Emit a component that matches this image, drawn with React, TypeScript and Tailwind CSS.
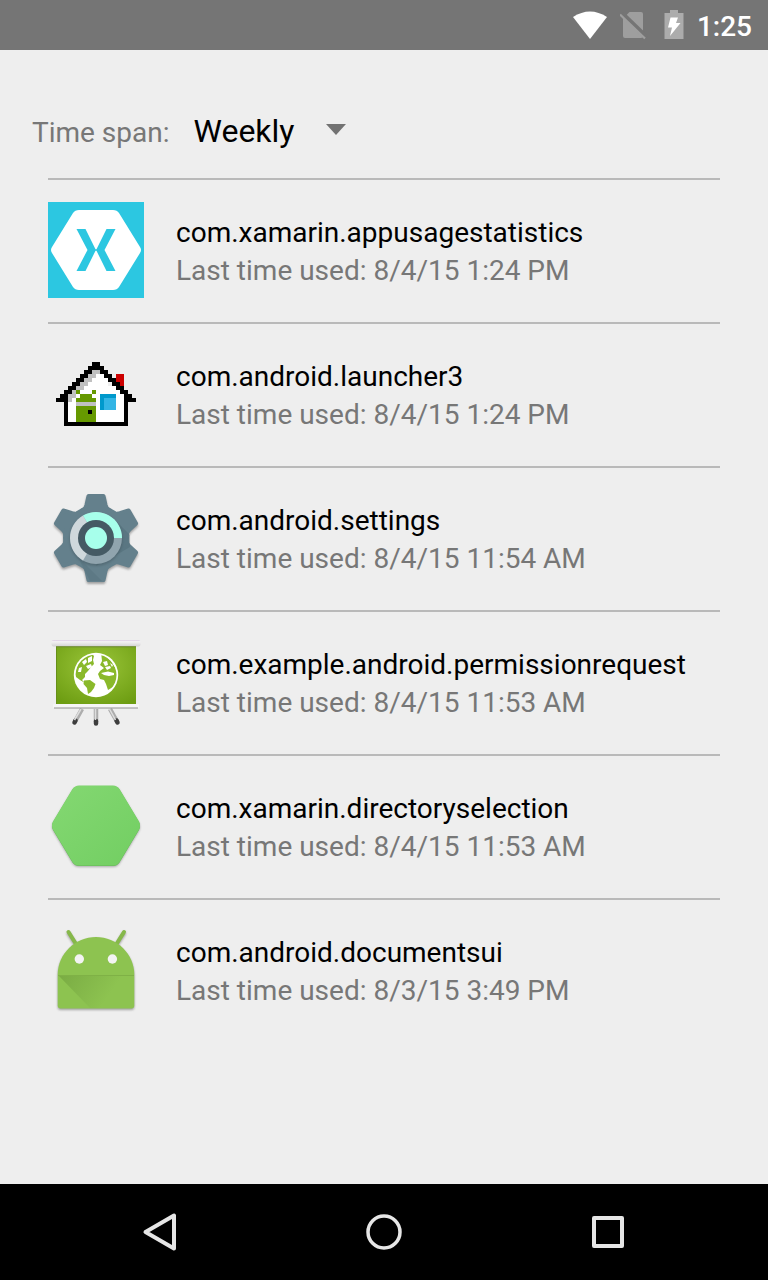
import type { ReactNode } from 'react';

function XamarinIcon() {
  return (
    <svg viewBox="0 0 96 96" className="size-24 shrink-0" aria-hidden="true">
      <rect width="96" height="96" fill="#2cc7e1" />
      <path d="M31 8H65Q69 8 71 11L92 45Q94 48 92 51L71 85Q69 88 65 88H31Q27 88 25 85L4 51Q2 48 4 45L25 11Q27 8 31 8Z" fill="#fff" />
      <path d="M28.500 27H37.500L47.500 47.200H48.500L58.500 27H67.500L56.500 48L67.500 69H58.500L48.500 48.800H47.500L37.500 69H28.500L39.500 48Z" fill="#2cc7e1" />
    </svg>
  );
}

type Cell = [x: number, y: number, w: number, h: number, fill: string];

const K = '#000000';
const G = '#c0c0c0';
const V = '#669900';
const R = '#cc0000';
const D = '#0099cc';

const house: Cell[] = [
  [3, 9, 14, 6, '#fff'], [5, 6, 10, 3, '#fff'], [7, 4, 6, 2, '#fff'], [9, 3, 3, 1, '#fff'], [4, 8, 13, 1, '#fff'], [4, 7, 12, 1, '#fff'],
  [15, 3, 2, 3, R],
  [9, 2, 2, 1, G], [8, 3, 2, 1, G], [7, 4, 2, 1, G], [6, 5, 2, 1, G], [5, 6, 2, 1, G], [4, 7, 1, 1, G], [3, 8, 2, 1, G], [3, 9, 1, 1, G],
  [9, 0, 2, 1, K], [8, 1, 4, 1, K], [7, 2, 2, 1, K], [11, 2, 2, 1, K], [6, 3, 2, 1, K], [12, 3, 2, 1, K],
  [5, 4, 2, 1, K], [13, 4, 2, 1, K], [4, 5, 2, 1, K], [14, 5, 2, 1, K], [3, 6, 2, 1, K], [15, 6, 2, 1, K],
  [2, 7, 2, 1, K], [16, 7, 2, 1, K], [1, 8, 2, 1, K], [17, 8, 2, 1, K], [0, 9, 3, 1, K], [17, 9, 3, 1, K],
  [2, 10, 1, 6, K], [17, 10, 1, 6, K], [2, 15, 16, 1, K],
  [5, 7, 1, 1, V], [9, 7, 1, 1, V], [6, 8, 3, 1, V], [5, 9, 5, 6, V], [5, 10, 5, 1, G], [8, 12, 1, 1, K],
  [11, 8, 4, 4, D], [12, 9, 3, 3, '#33b5e5'],
];

function LauncherIcon() {
  return (
    <svg viewBox="0 0 96 96" className="size-24 shrink-0" shapeRendering="crispEdges" aria-hidden="true">
      <g transform="translate(8 16) scale(4)">
        {house.map(([x, y, w, h, fill], i) => (
          <rect key={i} x={x} y={y} width={w} height={h} fill={fill} />
        ))}
      </g>
    </svg>
  );
}

function Gear({ fill }: { fill: string }) {
  return (
    <g fill={fill} stroke={fill} strokeWidth="4" strokeLinejoin="round">
      <circle cx="48" cy="48" r="31" />
      {[0, 60, 120, 180, 240, 300].map((a) => (
        <path key={a} d="M35 20Q37.500 19 38.500 15L40.500 6H55.500L57.500 15Q58.500 19 61 20L48 44Z" transform={`rotate(${a} 48 48)`} />
      ))}
    </g>
  );
}

function SettingsIcon() {
  return (
    <svg viewBox="0 0 96 96" className="size-24 shrink-0" aria-hidden="true">
      <defs>
        <filter id="soft" x="-10%" y="-10%" width="120%" height="120%">
          <feGaussianBlur stdDeviation="1" />
        </filter>
      </defs>
      <g opacity=".4" transform="translate(0 2)" filter="url(#soft)"><Gear fill="#333" /></g>
      <Gear fill="#64808c" />
      <path d="M30 67L54 91H42L37 81Z" fill="#486570" opacity=".25" />
      <path d="M67 30L82 45V57L70 64L48 76Z" fill="#486570" opacity=".35" />
      <circle cx="48" cy="49.500" r="26.500" fill="#37474f" opacity=".35" filter="url(#soft)" />
      <circle cx="48" cy="48" r="26" fill="#90a4ae" />
      <path d="M48 48L35 70.500A26 26 0 0 1 35 25.500Z" fill="#cfd8dc" />
      <path d="M48 48L35 25.500A26 26 0 0 1 74 48Z" fill="#a7ffeb" />
      <circle cx="48" cy="48" r="18" fill="#455a64" />
      <circle cx="48" cy="48" r="11" fill="#a7ffeb" />
    </svg>
  );
}

function BoardIcon() {
  return (
    <svg viewBox="0 0 96 96" className="size-24 shrink-0" aria-hidden="true">
      <defs>
        <radialGradient id="board" cx=".5" cy=".35" r=".75">
          <stop offset="0" stopColor="#9bc63a" />
          <stop offset="1" stopColor="#6d9d12" />
        </radialGradient>
        <linearGradient id="rail" x1="0" y1="0" x2="0" y2="1">
          <stop offset="0" stopColor="#d9c9e2" />
          <stop offset=".25" stopColor="#f4f2f5" />
          <stop offset="1" stopColor="#d2d2d2" />
        </linearGradient>
        <clipPath id="globe"><circle cx="48" cy="41" r="20.500" /></clipPath>
      </defs>
      <g strokeWidth="4.500" fill="none">
        <path d="M34 75L27 87.500M48 75V88M62 75L69 87.500" stroke="#adadad" />
        <path d="M27.500 86.500L26.500 88.500M48 87V89.500M68.500 86.500L69.500 88.500" stroke="#3d3d3d" strokeLinecap="round" />
      </g>
      <path d="M33 75L26.500 86M47.500 75V86M61.500 75L67.500 86" stroke="#dedede" strokeWidth="1.500" />
      <rect x="8" y="11" width="80" height="60" fill="#668f18" />
      <rect x="9" y="11" width="79" height="59" fill="url(#board)" />
      <rect x="3.500" y="6" width="89" height="6.500" rx="2" fill="url(#rail)" />
      <path d="M8 12.800H88" stroke="#6d8632" strokeWidth="1" />
      <rect x="5" y="70" width="86" height="4" rx="1" fill="#f6f6f6" />
      <path d="M6 74H90" stroke="#929292" strokeWidth="1.200" />
      <circle cx="48" cy="41" r="22.200" fill="#fff" />
      <g clipPath="url(#globe)" fill="#8ab92b">
        <path d="M27 40L29 31L35 23L43 19L46 22L45 26L46 30L43 33L40 37L37 40L37 43L34 46L37 49L32 46L28 43Z" />
        <path d="M36 46.500L42 46L47.500 50L46 54L43 58L40 60L39 54L35.500 50Z" />
        <path d="M53 18L58 22L63 27L70 38L70 45L65 53L60 56L58 50L56 46L52 45L50 40L52 37L56 34L52 31L54 27Z" />
      </g>
      <g clipPath="url(#globe)" fill="#fff">
        <path d="M34 28L38 25L39 28L36 31ZM40 24L44 22L44 27L40 29ZM38 32L43 30L44 33L40 35ZM31 34L34 33L33 38L30 38ZM55 28L59 27L60 31L57 32ZM57 33L62 32L63 34L59 36ZM53 39L60 37.500L66 39L66 41L61 42L56 41ZM62 29L65 31L64 33Z" />
      </g>
    </svg>
  );
}

const hexagon = 'M31 8H65Q69 8 71.500 11.500L91 44Q93 48 91 52L71.500 84.500Q69 88 65 88H31Q27 88 24.500 84.500L5 52Q3 48 5 44L24.500 11.500Q27 8 31 8Z';

function HexagonIcon() {
  return (
    <svg viewBox="0 0 96 96" className="size-24 shrink-0" aria-hidden="true">
      <defs>
        <linearGradient id="hex" x1="0" y1="0" x2="1" y2="1">
          <stop offset="0" stopColor="#84d872" />
          <stop offset="1" stopColor="#72ce62" />
        </linearGradient>
      </defs>
      <path d={hexagon} fill="#444" opacity=".4" filter="url(#soft)" transform="translate(0 1)" />
      <path d={hexagon} fill="#65b657" />
      <path d={hexagon} fill="url(#hex)" transform="translate(0 -.4)" />
    </svg>
  );
}

const robot = 'M9.700 52C10 32 27 15 48 15S86 32 86.300 52V83.500Q86.300 86.500 83.300 86.500H12.700Q9.700 86.500 9.700 83.500Z';

function DocumentsIcon() {
  return (
    <svg viewBox="0 0 96 96" className="size-24 shrink-0" aria-hidden="true">
      <defs>
        <linearGradient id="fold" gradientUnits="userSpaceOnUse" x1="12" y1="52" x2="55" y2="82">
          <stop offset="0" stopColor="#6d9c3b" stopOpacity=".6" />
          <stop offset="1" stopColor="#6d9c3b" stopOpacity="0" />
        </linearGradient>
      </defs>
      <g transform="translate(0 1.500)" opacity=".45" filter="url(#soft)">
        <path d={robot} fill="#444" />
        <path d="M20.500 10L28 22M76 10L68.500 22" stroke="#444" strokeWidth="4" strokeLinecap="round" />
      </g>
      <path d="M20.500 10L28 22M76 10L68.500 22" stroke="#86b84a" strokeWidth="4" strokeLinecap="round" />
      <path d={robot} fill="#8dc350" />
      <path d="M10 53H86V86H42Z" fill="url(#fold)" />
      <path d="M10 53.500H86" stroke="#7fb146" strokeWidth="1.200" />
      <circle cx="31.300" cy="37" r="4.700" fill="#f3f3f3" />
      <circle cx="64.400" cy="37" r="4.700" fill="#f3f3f3" />
    </svg>
  );
}

const apps: { name: string; used: string; icon: ReactNode }[] = [
  { name: 'com.xamarin.appusagestatistics', used: '8/4/15 1:24 PM', icon: <XamarinIcon /> },
  { name: 'com.android.launcher3', used: '8/4/15 1:24 PM', icon: <LauncherIcon /> },
  { name: 'com.android.settings', used: '8/4/15 11:54 AM', icon: <SettingsIcon /> },
  { name: 'com.example.android.permissionrequest', used: '8/4/15 11:53 AM', icon: <BoardIcon /> },
  { name: 'com.xamarin.directoryselection', used: '8/4/15 11:53 AM', icon: <HexagonIcon /> },
  { name: 'com.android.documentsui', used: '8/3/15 3:49 PM', icon: <DocumentsIcon /> },
];

function StatusBar() {
  return (
    <header className="flex h-[50px] items-center justify-end bg-[#757575] pr-4 text-white">
      <svg viewBox="0 0 36 30" className="mr-3 h-[30px] w-9" aria-hidden="true">
        <path d="M1 7Q18-4 35 7L18 29Z" fill="#fff" />
      </svg>
      <svg viewBox="0 0 28 30" className="mr-4 h-[30px] w-7" aria-hidden="true">
        <path d="M9.500 2H21Q23 2 23 4V26Q23 28 21 28H5Q3 28 3 26V8.500Z" fill="#9e9e9e" />
        <path d="M2 3L27 27" stroke="#757575" strokeWidth="4" />
        <path d="M0 4.500L25 28.500" stroke="#9e9e9e" strokeWidth="2.200" />
      </svg>
      <svg viewBox="0 0 20 30" className="mr-[13px] h-[30px] w-5" aria-hidden="true">
        <path d="M6 0H14V3H19.500V29H.500V3H6Z" fill="#acacac" />
        <path d="M6.500 7.500H14L12 13H16.500L6 26L8 17.500H4Z" fill="#fff" />
      </svg>
      <time className="pt-1 text-[28px] leading-8 font-medium">1:25</time>
    </header>
  );
}

function NavButton({ label, children }: { label: string; children: ReactNode }) {
  return (
    <button type="button" aria-label={label} className="flex h-full w-56 items-center justify-center">
      <svg viewBox="0 0 40 40" className="size-10" fill="none" stroke="#e6e6e6" strokeWidth="4" strokeLinejoin="round">
        {children}
      </svg>
    </button>
  );
}

export default function App() {
  return (
    <div className="flex min-h-screen flex-col bg-[#eeeeee] font-['Roboto',sans-serif]">
      <StatusBar />
      <main className="flex-1 px-8 pt-14">
        <div className="flex h-[72px] items-baseline pt-[5px]">
          <label htmlFor="span" className="mr-6 text-[28px] leading-10 text-[#777777]">Time span:</label>
          <div className="relative">
            <select id="span" defaultValue="Weekly" className="w-40 appearance-none bg-transparent text-[32px] leading-10 text-black outline-none">
              <option>Daily</option>
              <option>Weekly</option>
              <option>Monthly</option>
              <option>Yearly</option>
            </select>
            <svg viewBox="0 0 20 12" className="pointer-events-none absolute top-[13px] right-2 h-3 w-5" aria-hidden="true">
              <path d="M0 0H20L10 11Z" fill="#727272" />
            </svg>
          </div>
        </div>
        <ul className="px-4">
          {apps.map((app) => (
            <li key={app.name} className="flex items-center gap-8 border-t-2 border-[#b9b9b9] pt-[22px] pb-6">
              {app.icon}
              <div className="min-w-0 pt-1 text-[28px] leading-[38px]">
                <p className="text-black">{app.name}</p>
                <p className="text-[#777777]">Last time used: {app.used}</p>
              </div>
            </li>
          ))}
        </ul>
      </main>
      <nav className="flex h-24 justify-center bg-black" aria-label="System">
        <NavButton label="Back">
          <path d="M5.500 20L34 3.500V36.500Z" />
        </NavButton>
        <NavButton label="Home">
          <circle cx="20" cy="20" r="16" strokeWidth="3.500" />
        </NavButton>
        <NavButton label="Overview">
          <rect x="6" y="6" width="28" height="28" />
        </NavButton>
      </nav>
    </div>
  );
}
